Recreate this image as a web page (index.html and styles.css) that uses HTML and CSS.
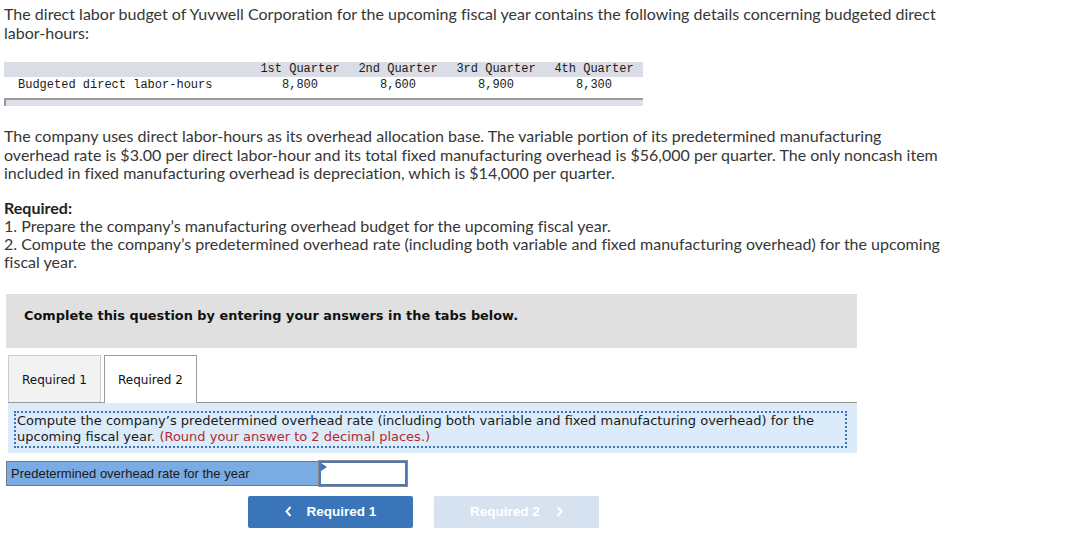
FILE: index.html
```html
<!DOCTYPE html>
<html>
<head>
<meta charset="utf-8">
<link rel="stylesheet" href="styles.css">
</head>
<body>
<div class="page">
  <p class="text intro">The direct labor budget of Yuvwell Corporation for the upcoming fiscal year contains the following details concerning budgeted direct labor&#8209;hours:</p>

  <div class="table-wrap">
    <table class="budget">
      <tr class="head">
        <th class="label"></th>
        <th>1st Quarter</th>
        <th>2nd Quarter</th>
        <th>3rd Quarter</th>
        <th>4th Quarter</th>
      </tr>
      <tr>
        <td class="label">Budgeted direct labor-hours</td>
        <td>8,800</td>
        <td>8,600</td>
        <td>8,900</td>
        <td>8,300</td>
      </tr>
    </table>
    <div class="scrollbar"></div>
  </div>

  <p class="text para">The company uses direct labor-hours as its overhead allocation base. The variable portion of its predetermined manufacturing overhead rate is $3.00 per direct labor-hour and its total fixed manufacturing overhead is $56,000 per quarter. The only noncash item included in fixed manufacturing overhead is depreciation, which is $14,000 per quarter.</p>

  <p class="text required"><strong>Required:</strong><br>1. Prepare the company’s manufacturing overhead budget for the upcoming fiscal year.<br>2. Compute the company’s predetermined overhead rate (including both variable and fixed manufacturing overhead) for the upcoming fiscal year.</p>

  <div class="instruct">Complete this question by entering your answers in the tabs below.</div>

  <div class="tabs">
    <div class="tab">Required 1</div>
    <div class="tab active">Required 2</div>
  </div>

  <div class="panel">
    <div class="prompt">Compute the company’s predetermined overhead rate (including both variable and fixed manufacturing overhead) for the upcoming fiscal year. <span class="note">(Round your answer to 2 decimal places.)</span></div>
  </div>

  <div class="answer-row">
    <div class="answer-label">Predetermined overhead rate for the year</div>
    <div class="answer-input"><span class="flag"></span></div>
  </div>

  <div class="nav">
    <button class="btn prev"><svg class="chev" width="7" height="11" viewBox="0 0 7 11"><polyline points="5.5,1 1.5,5.5 5.5,10" fill="none" stroke="#fff" stroke-width="2"/></svg>Required 1</button>
    <button class="btn next">Required 2<svg class="chev" width="7" height="11" viewBox="0 0 7 11"><polyline points="1.5,1 5.5,5.5 1.5,10" fill="none" stroke="#fff" stroke-width="2"/></svg></button>
  </div>
</div>
</body>
</html>
```

FILE: styles.css
```css
* { box-sizing: border-box; }
html, body { margin: 0; padding: 0; background: #fff; }
.page {
  padding: 5px 4px 0 4px;
  width: 1078px;
}
.text {
  font-family: "Lato", "Open Sans", sans-serif;
  font-size: 16px;
  letter-spacing: 0.01px;
  font-variant-ligatures: none;
  line-height: 18.5px;
  color: #363636;
  margin: 0;
  width: 942px;
}
.intro { margin-bottom: 20px; }

.table-wrap { width: 639px; }
.budget {
  border-collapse: collapse;
  width: 639px;
  font-family: "Liberation Mono", "DejaVu Sans Mono", monospace;
  font-size: 12px;
  color: #1a1a1a;
}
.budget th, .budget td {
  padding: 0;
  font-weight: normal;
  text-align: center;
  width: 98px;
  white-space: nowrap;
}
.budget .head th { background: #dadde6; height: 15px; line-height: 15px; }
.budget td { height: 16px; line-height: 16px; }
.budget .label { width: 247px; text-align: left; padding-left: 14px; }
.scrollbar {
  margin-top: 5px;
  height: 8px;
  border-top: 2px solid #9a9a9a;
  border-left: 2px solid #9a9a9a;
  background: #dde0e8;
}

.para { margin-top: 21px; }
.required { margin-top: 16px; line-height: 18px; }
.required strong { font-weight: 700; color: #222; }

.instruct {
  margin: 23px 0 0 2px;
  width: 851px;
  height: 54px;
  background: #e0e0e0;
  padding: 14px 0 0 18px;
  font-family: "DejaVu Sans", Verdana, sans-serif;
  font-weight: bold;
  font-size: 12.9px;
  color: #111;
}

.tabs {
  display: flex;
  gap: 3px;
  margin: 7px 0 0 4px;
  width: 849px;
  border-bottom: 1px solid #999;
  align-items: flex-end;
}
.tab {
  width: 93px;
  height: 47px;
  padding: 17px 0 0 13px;
  background: #f2f2f2;
  border: 1px solid #ccc;
  border-bottom: none;
  font-family: "DejaVu Sans", Verdana, sans-serif;
  font-size: 12px;
  color: #111;
}
.tab.active {
  background: #fff;
  border: 1px solid #999;
  border-bottom: none;
  margin-bottom: -1px;
  height: 48px;
}

.panel {
  margin-left: 4px;
  width: 849px;
  background: #dbebf9;
  padding: 8px 10px 5px 6px;
}
.prompt {
  border: 2px dotted #3a73b8;
  padding: 0 0 1px 1px;
  font-family: "DejaVu Sans", Verdana, sans-serif;
  font-size: 13px;
  line-height: 16px;
  color: #1a1a1a;
}
.note { color: #b52a2f; }

.answer-row {
  display: flex;
  margin: 8px 0 0 2px;
  height: 25px;
}
.answer-label {
  width: 313px;
  background: #7aabe3;
  border: 1px solid #6c7a8c;
  font-family: "Liberation Sans", Arial, sans-serif;
  font-size: 13px;
  line-height: 23px;
  padding-left: 4px;
  color: #1a1a1a;
}
.answer-input {
  position: relative;
  width: 88px;
  background: #fff;
  border: 2px solid #4d7ab5;
  outline: 1px solid #8a8a8a;
}
.flag {
  position: absolute;
  left: 0;
  top: 0;
  width: 0;
  height: 0;
  border-top: 4px solid transparent;
  border-bottom: 4px solid transparent;
  border-left: 6px solid #3a73b8;
}

.nav {
  display: flex;
  gap: 21px;
  margin: 10px 0 0 244px;
}
.btn {
  width: 165px;
  height: 32px;
  border: none;
  border-radius: 2px;
  font-family: "Liberation Sans", Arial, sans-serif;
  font-weight: bold;
  font-size: 13.5px;
  color: #fff;
  display: flex;
  align-items: center;
  justify-content: center;
  padding: 0;
}
.btn.prev { background: #3a75ba; }
.btn.next { background: #d6e2f0; }
.chev { display: block; }
.prev .chev { margin-right: 15px; }
.next .chev { margin-left: 16px; }
```
